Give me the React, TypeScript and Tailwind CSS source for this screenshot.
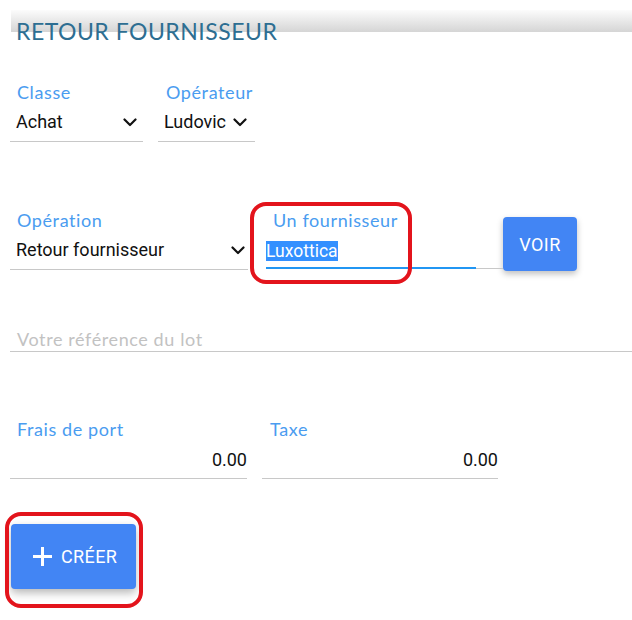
import React from "react";

const Chevron = () => (
  <svg width="14" height="9" viewBox="0 0 14 9" className="shrink-0">
    <polyline points="1.5,1.5 7,7 12.5,1.5" fill="none" stroke="#111" strokeWidth="2.2" strokeLinecap="round" strokeLinejoin="round" />
  </svg>
);

const labelCls = "h-[20px] leading-[17px] text-[18px] text-[#4a9cf0] tracking-[0.6px] font-['Lato',sans-serif] whitespace-nowrap";
const valueCls = "h-[22px] leading-[22px] text-[18px] text-[#111] font-['Roboto',sans-serif] whitespace-nowrap";

export default function App() {
  return (
    <div className="relative w-[632px] h-[620px] bg-white overflow-hidden">
      <div className="ml-[11px] mt-[10px] h-[22px] bg-gradient-to-b from-[#fcfcfc] to-[#d5d5d5]" />
      <div className="relative -mt-[15px] ml-[16px] h-[28px] leading-[28px] text-[23px] text-[#2d6e92] font-['Lato',sans-serif] tracking-[0.5px]">
        RETOUR FOURNISSEUR
      </div>

      {/* Row 1 */}
      <div className="mt-[39px] ml-[10px] flex gap-[15px]">
        <div className="w-[133px] border-b border-[#c8c8c8] pb-[8px]">
          <div className={`${labelCls} pl-[7px]`}>Classe</div>
          <div className="mt-[7px] flex items-center justify-between pl-[6px] pr-[6px]">
            <span className={valueCls}>Achat</span>
            <Chevron />
          </div>
        </div>
        <div className="w-[97px] border-b border-[#c8c8c8] pb-[8px]">
          <div className={`${labelCls} pl-[8px]`}>Opérateur</div>
          <div className="mt-[7px] flex items-center gap-[7px] pl-[6px]">
            <span className={valueCls}>Ludovic</span>
            <Chevron />
          </div>
        </div>
      </div>

      {/* Row 2 */}
      <div className="mt-[70px] ml-[10px] flex items-start">
        <div className="w-[238px] border-b border-[#c8c8c8] pb-[8px]">
          <div className={`${labelCls} pl-[7px]`}>Opération</div>
          <div className="mt-[7px] flex items-center justify-between pl-[6px] pr-[3px]">
            <span className={valueCls}>Retour fournisseur</span>
            <Chevron />
          </div>
        </div>
        <div className="ml-[18px] w-[237px] border-b border-[#c8c8c8] relative">
          <div className={`${labelCls} pl-[7px]`}>Un fournisseur</div>
          <div className="mt-[7px] pb-[6px] h-[28px]">
            <span className="inline-block h-[20px] leading-[20px] text-[17.5px] text-white bg-[#3390ff] font-['Roboto',sans-serif]">Luxottica</span>
          </div>
          <div className="w-[210px] h-[2px] bg-[#2196f3] -mb-px" />
        </div>
        <button className="mt-[5px] w-[74px] h-[54px] rounded-[4px] bg-[#4285f4] text-white text-[18px] font-['Roboto',sans-serif] tracking-[0.5px] shadow-[0_3px_6px_rgba(0,0,0,0.25)]">
          VOIR
        </button>
      </div>

      {/* Ref */}
      <div className="mt-[59px] ml-[10px] border-b border-[#c8c8c8]">
        <div className="pl-[7px] h-[21px] leading-[18px] text-[18px] text-[#c2c2c2] tracking-[0.6px] font-['Lato',sans-serif]">
          Votre référence du lot
        </div>
      </div>

      {/* Row 3 */}
      <div className="mt-[69px] ml-[10px] flex gap-[15px]">
        <div className="w-[237px] border-b border-[#c8c8c8] pb-[7px]">
          <div className={`${labelCls} pl-[7px]`}>Frais de port</div>
          <div className={`mt-[8px] text-right ${valueCls}`}>0.00</div>
        </div>
        <div className="w-[236px] border-b border-[#c8c8c8] pb-[7px]">
          <div className={`${labelCls} pl-[8px]`}>Taxe</div>
          <div className={`mt-[8px] text-right ${valueCls}`}>0.00</div>
        </div>
      </div>

      {/* CREER */}
      <div className="mt-[45px] ml-[11px]">
        <button className="w-[125px] h-[65px] rounded-[4px] bg-[#4285f4] text-white flex items-center pl-[21px] gap-[8px] shadow-[0_4px_8px_rgba(0,0,0,0.28)]">
          <svg width="21" height="21" viewBox="0 0 21 21">
            <path d="M10.5 1v19M1 10.5h19" stroke="#fff" strokeWidth="3" />
          </svg>
          <span className="text-[18px] font-['Roboto',sans-serif] tracking-[0.4px]">CRÉER</span>
        </button>
      </div>

      {/* Annotations */}
      <div className="absolute left-[250px] top-[202px] w-[162px] h-[82px] border-[4px] border-[#e3141c] rounded-[16px] pointer-events-none" />
      <div className="absolute left-[5px] top-[512px] w-[138px] h-[96px] border-[4px] border-[#e3141c] rounded-[16px] pointer-events-none" />
    </div>
  );
}
